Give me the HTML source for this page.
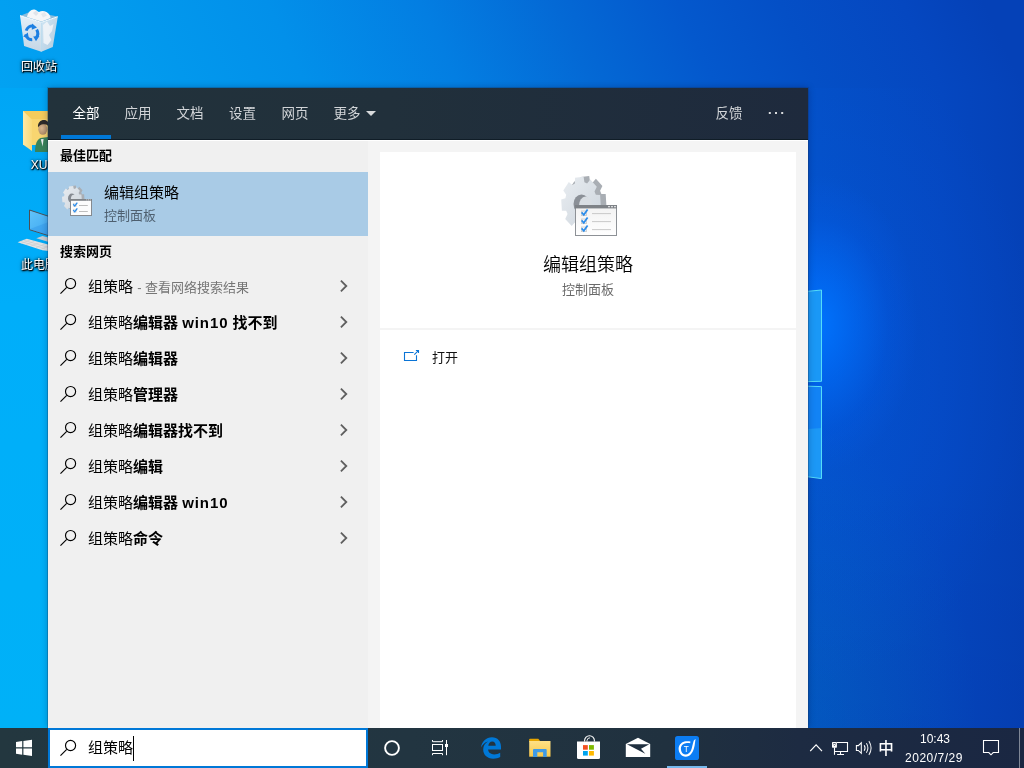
<!DOCTYPE html>
<html lang="zh-CN">
<head>
<meta charset="utf-8">
<title>搜索 - 组策略</title>
<style>
*{box-sizing:border-box;margin:0;padding:0}
html,body{width:1024px;height:768px;overflow:hidden}
body{position:relative;font-family:"Liberation Sans","Noto Sans CJK SC",sans-serif;color:#000;
background:
 linear-gradient(90deg,#02a2f2 0%,#029bee 14%,#0290ea 30%,#037ee2 45%,#0469d5 58%,#0458cd 70%,#044fc6 80%,#0547c0 92%,#0541b7 100%);}
#wt{position:absolute;left:0;top:0;width:1024px;height:88px;overflow:hidden}
#wt div{position:absolute;left:-100px;top:0;width:1300px;height:88px;background:linear-gradient(90deg,#02a2f2 0px,#02a2f2 100.0px,#029bee 243.4px,#0290ea 407.2px,#037ee2 560.8px,#0469d5 693.9px,#0458cd 816.8px,#044fc6 919.2px,#0547c0 1042.1px,#0541b7 1124.0px,#0541b7 1300px);transform:skewX(25deg);transform-origin:0 100%}
#wr{position:absolute;left:808px;top:88px;width:216px;height:640px;background:
 radial-gradient(ellipse 100px 150px at 10px 236px,rgba(0,116,255,.95) 0%,rgba(0,112,255,.62) 32%,rgba(0,100,250,.2) 70%,rgba(0,100,250,0) 100%),
 radial-gradient(ellipse 230px 330px at 0px 270px,rgba(0,105,255,.17) 0%,rgba(0,105,255,.1) 50%,rgba(0,105,255,0) 100%),
 radial-gradient(ellipse 170px 300px at 0px 640px,rgba(0,150,190,.16) 0%,rgba(0,150,190,0) 100%),
 linear-gradient(180deg,rgba(0,0,60,0) 0%,rgba(0,0,60,0) 60%,rgba(0,0,60,.05) 100%)}
#wl{position:absolute;left:0;top:88px;width:48px;height:640px;background:linear-gradient(180deg,#00a6f5 0%,#00aefa 34%,#00b1f7 100%)}
.abs{position:absolute}
#desk,#hdr,#left,#card,#tb{will-change:transform}
svg{display:block;overflow:visible}

/* desktop icons */
.dlabel{position:absolute;width:78px;text-align:center;font-size:12px;line-height:14px;color:#fff;
 text-shadow:1px 1px 1px rgba(0,0,0,1),0 1px 2px rgba(0,0,0,.9),0 0 3px rgba(0,0,0,.75),0 0 4px rgba(0,0,0,.4);white-space:nowrap}

/* search panel */
#panel{position:absolute;left:48px;top:88px;width:760px;height:640px;background:#f4f4f4;overflow:hidden;box-shadow:0 0 0 1px rgba(20,50,90,.28),0 0 7px rgba(0,10,40,.3)}
#hdr{position:absolute;left:0;top:0;width:760px;height:52px;background:linear-gradient(90deg,#22323b 0%,#21303b 45%,#1e2a3d 100%);border-bottom:1px solid #101d27}
.tab{position:absolute;top:0;height:52px;font-size:13.5px;line-height:20px;padding-top:15.5px;color:#d2d5d8;white-space:nowrap}
.tab.sel{color:#fff}
#uline{position:absolute;left:13px;top:47px;width:50px;height:4px;background:#0078d7}
#whiteline{position:absolute;left:0;top:52px;width:760px;height:1px;background:#fff}
#left{position:absolute;left:0;top:53px;width:320px;height:587px;background:#f0f0f0}
.sect{position:absolute;left:12px;font-size:13px;font-weight:bold;line-height:18px;color:#000;white-space:nowrap}
#best{position:absolute;left:0;top:84px;width:320px;height:64px;background:#a9cbe6}
#best .t1{position:absolute;left:56px;top:10px;font-size:15px;line-height:22px;white-space:nowrap}
#best .t2{position:absolute;left:56px;top:35px;font-size:13px;line-height:18px;color:#4e5f6f;white-space:nowrap}
.row{position:absolute;left:0;width:320px;height:36px}
.row .mag{position:absolute;left:12px;top:10px}
.row .tx{position:absolute;left:40px;top:8px;font-size:15px;line-height:22px;white-space:nowrap;color:#000}
.row .tx b{font-weight:bold}
.row .tx .l{letter-spacing:.9px}
.row .tx i{font-style:normal;font-size:13px;color:#767676}
.row .chev{position:absolute;left:292px;top:12px}
#card{position:absolute;left:332px;top:64px;width:416px;height:576px;background:#fff}
#card .title{position:absolute;left:0;top:161px;width:416px;text-align:center;font-size:18px;line-height:28px;color:#000;font-weight:350}
#card .sub{position:absolute;left:0;top:192px;width:416px;text-align:center;font-size:13px;line-height:18px;color:#6a6a6a}
#card .div{position:absolute;left:0;top:176px;width:416px;height:2px;background:#f4f4f4}
#card .open{position:absolute;left:52px;top:197px;font-size:13px;line-height:18px;color:#111}

/* taskbar */
#tb{position:absolute;left:0;top:728px;width:1024px;height:40px;background:linear-gradient(90deg,#23373f 0%,#223541 40%,#20313f 65%,#1d2b42 78%,#1a2742 100%)}
#sbox{position:absolute;left:48px;top:0;width:320px;height:40px;background:#fff;border:2px solid #0078d7}
#sbox .tx{position:absolute;left:38px;top:7px;font-size:15px;line-height:22px;color:#000;white-space:nowrap}
#caret{position:absolute;left:83px;top:6px;width:1px;height:25px;background:#000}
.clock{position:absolute;color:#fff;font-size:12px;line-height:14px;white-space:nowrap;text-align:center}
</style>
</head>
<body>

<!-- WALLPAPER TOP -->
<div id="wt"><div></div></div>

<!-- WALLPAPER LEFT -->
<div id="wl"></div>

<!-- WALLPAPER RIGHT -->
<div id="wr">
  <svg class="abs" style="left:0;top:0" width="216" height="640" viewBox="808 88 216 640">
    <defs><linearGradient id="pane" x1="0" y1="0" x2="1" y2="0"><stop offset="0" stop-color="#0f84fa"/><stop offset="1" stop-color="#1c98fb"/></linearGradient></defs>
    <path d="M808 291.3L821.5 290V381.3L808 381.6Z" fill="#1a98f6"/>
    <path d="M808 386.2L821.5 386.6V478.6L808 476.8Z" fill="#1283f5"/>
    <path d="M808 429L821.5 428V478.6L808 476.8Z" fill="#1c98f6"/>
    <g fill="none" stroke="#55dcf8" stroke-width="1"><path d="M808 291.3L821.5 290V381.3L808 381.6"/><path d="M808 386.2L821.5 386.6V478.6L808 476.8"/></g>
  </svg>
</div>

<!-- DESKTOP ICONS -->
<div id="desk">
<svg class="abs" style="left:0;top:0" width="120" height="290" viewBox="0 0 120 290">
  <defs>
    <linearGradient id="binL" x1="0" y1="0" x2="0" y2="1"><stop offset="0" stop-color="#eef3f8" stop-opacity=".95"/><stop offset="1" stop-color="#cfd9e4" stop-opacity=".95"/></linearGradient>
    <linearGradient id="binR" x1="0" y1="0" x2="1" y2="1"><stop offset="0" stop-color="#e6edf4" stop-opacity=".9"/><stop offset="1" stop-color="#c3cfdc" stop-opacity=".92"/></linearGradient>
    <linearGradient id="flap" x1="0" y1="0" x2="1" y2="0"><stop offset="0" stop-color="#fde9a8"/><stop offset="1" stop-color="#f9d978"/></linearGradient>
    <linearGradient id="scr" x1="0" y1="0" x2="1" y2="1"><stop offset="0" stop-color="#62c4fa"/><stop offset="1" stop-color="#2f9cee"/></linearGradient>
    <radialGradient id="face" cx=".4" cy=".4" r=".7"><stop offset="0" stop-color="#d9b892"/><stop offset="1" stop-color="#a8845f"/></radialGradient>
  </defs>
  <!-- recycle bin -->
  <path d="M21 15.5L31 11.5L57.8 16.6L41.3 22.4Z" fill="#b9c7d6" fill-opacity=".75"/>
  <path d="M27 17C28 12 31 9 34.5 9.5C36.5 9.8 37.5 11.5 39 12C41 10.5 44 10.5 46.5 12C49 13.5 50.5 15.5 50.5 18L41.5 21.5Z" fill="#f4f6f8"/>
  <path d="M33 13L36 10.5L38.5 13.5L36 16Z" fill="#dfe4ea"/><path d="M41 14L44.5 12L47 15.5L43 17.5Z" fill="#e3e8ed"/>
  <path d="M20 15.6L41.3 22.4V51.7L24.1 45.9Z" fill="url(#binL)"/>
  <path d="M41.3 22.4L57.8 16.7L52.8 46.9L41.3 51.7Z" fill="url(#binR)"/>
  <path d="M43 25L47 21.5L50 26L53.5 24L52 31L49 35L51.5 40L47.5 45L43.5 43Z" fill="#f3f6f9" fill-opacity=".85"/>
  <path d="M20 15.6L41.3 22.4L57.8 16.7" fill="none" stroke="#f7fafc" stroke-width="1"/>
  <path d="M41.3 22.4V51.7" stroke="#dfe7ef" stroke-width=".6"/>
  <g fill="none" stroke="#1c7fe2" stroke-width="3">
    <path d="M26.2 30.6A6.2 6.8 0 0 1 33.2 26.2"/>
    <path d="M36.6 29.6A6.2 6.8 0 0 1 36.4 37.6"/>
    <path d="M32.2 39.6A6.2 6.8 0 0 1 25.6 34.4"/>
  </g>
  <path d="M32 23.4L37 27.4L31.8 29.8Z M39.4 36L36 41.2L33.2 36.4Z M23.2 36.4L27.8 32.6L28.8 38.2Z" fill="#1c7fe2"/>
  <!-- user folder -->
  <path d="M23 111H70V145H23Z" fill="#f4cc5c"/>
  <path d="M31.5 119H70V145H31.5Z" fill="#f8d570"/>
  <path d="M23 111L32 119.4V151L23 144.6Z" fill="url(#flap)"/>
  <path d="M35 152C35 144 37 139.5 40.5 138L48 137H56V152Z" fill="#39835a"/>
  <path d="M40.8 139.2L43.6 139L42.6 146.5Z" fill="#e9eef0"/>
  <ellipse cx="42.8" cy="129.2" rx="4.5" ry="5.6" fill="url(#face)"/>
  <path d="M38 127.5C37.5 122.5 40.5 120 44 120C47 120 49.5 122 49 127C47.5 124.5 45 124 43 124.3C41 124.6 39 125.5 38 127.5Z" fill="#2d2b29"/>
  <!-- this pc -->
  <path d="M29.5 210L62 220.7V239.8L29.5 229.7Z" fill="url(#scr)" stroke="#4b4f55" stroke-width="1"/>
  <path d="M29.9 229L62 217V239.5L29.9 229.3Z" fill="#2c8fe6" fill-opacity=".35"/>
  <path d="M36.3 238.2L42.5 236L62 241V246Z" fill="#c9cdd2"/>
  <path d="M17.6 242.3L26.8 238.8L62 248.2V252.6L42.4 250.2Z" fill="#e2e3e5"/>
  <g stroke="#c4c6c9" stroke-width=".5" fill="none"><path d="M20.5 241.3L45 248.8M23.6 240.1L48 247.4M21 243.5L30 240"/><path d="M26 244.6L34.5 241.2M31 246L39.5 242.6M36 247.6L44.5 244.2M41 249.2L49.5 245.6"/></g>
</svg>
<div class="dlabel" style="left:0;top:60px">回收站</div>
<div class="dlabel" style="left:0;top:158px">XU</div>
<div class="dlabel" style="left:0;top:258px">此电脑</div>
</div>

<!-- SEARCH PANEL -->
<div id="panel">
  <div id="hdr">
    <div class="tab sel" style="left:24.5px">全部</div>
    <div class="tab" style="left:76.5px">应用</div>
    <div class="tab" style="left:128.5px">文档</div>
    <div class="tab" style="left:181px">设置</div>
    <div class="tab" style="left:233.5px">网页</div>
    <div class="tab" style="left:285.5px">更多</div>
    <svg class="abs" style="left:318px;top:23px" width="10" height="5" viewBox="0 0 10 5"><path d="M0 0H10L5 5Z" fill="#d8dadc"/></svg>
    <div class="tab" style="left:667.5px">反馈</div>
    <svg class="abs" style="left:720px;top:24px" width="16" height="2" viewBox="0 0 16 2"><rect x="0.8" y="0" width="2" height="2" fill="#d8dadc"/><rect x="7" y="0" width="2" height="2" fill="#d8dadc"/><rect x="13.2" y="0" width="2" height="2" fill="#d8dadc"/></svg>
    <div id="uline"></div>
  </div>
  <div id="whiteline"></div>

  <div id="left">
    <div class="sect" style="top:6px">最佳匹配</div>
    <div id="best" style="top:31px">
      <div class="abs" id="ico32" style="left:12px;top:12px"><svg width="32" height="32" viewBox="60 184 32 32">
<defs><linearGradient id="gfs" x1="0" y1="0" x2="1" y2="1"><stop offset="0" stop-color="#e9edf1"/><stop offset="1" stop-color="#ccd4dc"/></linearGradient></defs>
<path d="M71.5 188.7 L71.6 186.0 L75.9 185.5 L76.3 188.2 L77.7 188.7 L79.2 186.8 L82.5 190.3 L81.3 192.6 L82.0 194.2 L84.1 194.2 L84.5 199.6 L82.4 200.2 L82.0 201.9 L83.5 203.8 L80.7 208.0 L78.9 206.5 L77.7 207.3 L77.6 210.0 L73.3 210.5 L72.9 207.8 L71.5 207.3 L70.0 209.2 L66.7 205.7 L67.9 203.4 L67.2 201.8 L65.1 201.8 L64.7 196.4 L66.8 195.8 L67.2 194.1 L65.7 192.2 L68.5 188.0 L70.3 189.5Z" fill="#a9aeb4"/>
<path d="M68.8 189.1 L68.9 186.4 L73.2 185.9 L73.6 188.6 L75.0 189.1 L76.5 187.2 L79.8 190.7 L78.6 193.0 L79.3 194.6 L81.4 194.6 L81.8 200.0 L79.7 200.6 L79.3 202.3 L80.8 204.2 L78.0 208.4 L76.2 206.9 L75.0 207.7 L74.9 210.4 L70.6 210.9 L70.2 208.2 L68.8 207.7 L67.3 209.6 L64.0 206.1 L65.2 203.8 L64.5 202.2 L62.4 202.2 L62.0 196.8 L64.1 196.2 L64.5 194.5 L63.0 192.6 L65.8 188.4 L67.6 189.9Z" fill="url(#gfs)"/>
<ellipse cx="71.8" cy="198.2" rx="3.8" ry="4.6" fill="#858a91"/>
<ellipse cx="73.9" cy="199" rx="3" ry="4.3" fill="#d9dee3"/>
<rect x="70.5" y="199.5" width="21" height="16" fill="#fcfcfc" stroke="#868a8f" stroke-width="1"/>
<rect x="70" y="199" width="22" height="1.8" fill="#7e8287"/>
<rect x="86.2" y="199.5" width="1" height=".8" fill="#e4e6e8"/><rect x="88" y="199.5" width="1" height=".8" fill="#e4e6e8"/><rect x="89.8" y="199.5" width="1" height=".8" fill="#e4e6e8"/>
<g fill="none" stroke="#d5d5d5" stroke-width="0.6"><rect x="73.3" y="203.4" width="3" height="3"/><rect x="73.3" y="209.2" width="3" height="3"/></g>
<g stroke="#bdbdbd" stroke-width="1"><path d="M79 205.5H87.8"/><path d="M79 211.5H87.8"/></g>
<g fill="none" stroke="#2b8cea" stroke-width="1.3"><path d="M73.2 204.3L74.8 205.9L77.3 202.6"/><path d="M73.2 210.1L74.8 211.7L77.3 208.4"/></g>
</svg></div>
      <div class="t1">编辑组策略</div>
      <div class="t2">控制面板</div>
    </div>
    <div class="sect" style="top:102px">搜索网页</div>

    <div class="row" style="top:127px"><svg class="mag" width="16" height="16" viewBox="0 0 16 16"><circle cx="10.55" cy="5.5" r="5.05" fill="none" stroke="#000" stroke-width="1.15"/><path d="M6.7 9.4L0.5 15.6" stroke="#000" stroke-width="1.15" fill="none"/></svg><div class="tx">组策略 <i>- 查看网络搜索结果</i></div><svg class="chev" width="8" height="12" viewBox="0 0 8 12"><path d="M0.9 0.7L6.3 6L0.9 11.3" fill="none" stroke="#5f5f5f" stroke-width="1.8"/></svg></div>
    <div class="row" style="top:163px"><svg class="mag" width="16" height="16" viewBox="0 0 16 16"><circle cx="10.55" cy="5.5" r="5.05" fill="none" stroke="#000" stroke-width="1.15"/><path d="M6.7 9.4L0.5 15.6" stroke="#000" stroke-width="1.15" fill="none"/></svg><div class="tx">组策略<b>编辑器 <span class="l">win10</span> 找不到</b></div><svg class="chev" width="8" height="12" viewBox="0 0 8 12"><path d="M0.9 0.7L6.3 6L0.9 11.3" fill="none" stroke="#5f5f5f" stroke-width="1.8"/></svg></div>
    <div class="row" style="top:199px"><svg class="mag" width="16" height="16" viewBox="0 0 16 16"><circle cx="10.55" cy="5.5" r="5.05" fill="none" stroke="#000" stroke-width="1.15"/><path d="M6.7 9.4L0.5 15.6" stroke="#000" stroke-width="1.15" fill="none"/></svg><div class="tx">组策略<b>编辑器</b></div><svg class="chev" width="8" height="12" viewBox="0 0 8 12"><path d="M0.9 0.7L6.3 6L0.9 11.3" fill="none" stroke="#5f5f5f" stroke-width="1.8"/></svg></div>
    <div class="row" style="top:235px"><svg class="mag" width="16" height="16" viewBox="0 0 16 16"><circle cx="10.55" cy="5.5" r="5.05" fill="none" stroke="#000" stroke-width="1.15"/><path d="M6.7 9.4L0.5 15.6" stroke="#000" stroke-width="1.15" fill="none"/></svg><div class="tx">组策略<b>管理器</b></div><svg class="chev" width="8" height="12" viewBox="0 0 8 12"><path d="M0.9 0.7L6.3 6L0.9 11.3" fill="none" stroke="#5f5f5f" stroke-width="1.8"/></svg></div>
    <div class="row" style="top:271px"><svg class="mag" width="16" height="16" viewBox="0 0 16 16"><circle cx="10.55" cy="5.5" r="5.05" fill="none" stroke="#000" stroke-width="1.15"/><path d="M6.7 9.4L0.5 15.6" stroke="#000" stroke-width="1.15" fill="none"/></svg><div class="tx">组策略<b>编辑器找不到</b></div><svg class="chev" width="8" height="12" viewBox="0 0 8 12"><path d="M0.9 0.7L6.3 6L0.9 11.3" fill="none" stroke="#5f5f5f" stroke-width="1.8"/></svg></div>
    <div class="row" style="top:307px"><svg class="mag" width="16" height="16" viewBox="0 0 16 16"><circle cx="10.55" cy="5.5" r="5.05" fill="none" stroke="#000" stroke-width="1.15"/><path d="M6.7 9.4L0.5 15.6" stroke="#000" stroke-width="1.15" fill="none"/></svg><div class="tx">组策略<b>编辑</b></div><svg class="chev" width="8" height="12" viewBox="0 0 8 12"><path d="M0.9 0.7L6.3 6L0.9 11.3" fill="none" stroke="#5f5f5f" stroke-width="1.8"/></svg></div>
    <div class="row" style="top:343px"><svg class="mag" width="16" height="16" viewBox="0 0 16 16"><circle cx="10.55" cy="5.5" r="5.05" fill="none" stroke="#000" stroke-width="1.15"/><path d="M6.7 9.4L0.5 15.6" stroke="#000" stroke-width="1.15" fill="none"/></svg><div class="tx">组策略<b>编辑器 <span class="l">win10</span></b></div><svg class="chev" width="8" height="12" viewBox="0 0 8 12"><path d="M0.9 0.7L6.3 6L0.9 11.3" fill="none" stroke="#5f5f5f" stroke-width="1.8"/></svg></div>
    <div class="row" style="top:379px"><svg class="mag" width="16" height="16" viewBox="0 0 16 16"><circle cx="10.55" cy="5.5" r="5.05" fill="none" stroke="#000" stroke-width="1.15"/><path d="M6.7 9.4L0.5 15.6" stroke="#000" stroke-width="1.15" fill="none"/></svg><div class="tx">组策略<b>命令</b></div><svg class="chev" width="8" height="12" viewBox="0 0 8 12"><path d="M0.9 0.7L6.3 6L0.9 11.3" fill="none" stroke="#5f5f5f" stroke-width="1.8"/></svg></div>
  </div>

  <div id="card">
    <div class="abs" id="ico64" style="left:176px;top:20px"><svg width="64" height="64" viewBox="0 0 64 64">
<defs><linearGradient id="gf64" x1="0" y1="0" x2="1" y2="1"><stop offset="0" stop-color="#e9edf1"/><stop offset="1" stop-color="#ccd4dc"/></linearGradient>
<linearGradient id="wf64" x1="0" y1="0" x2="0" y2="1"><stop offset="0" stop-color="#f2f2f2"/><stop offset="1" stop-color="#ffffff"/></linearGradient></defs>
<path d="M24.5 10.6 L24.6 4.9 L33.2 3.9 L34.0 9.5 L36.7 10.6 L39.9 6.7 L46.4 13.9 L44.1 18.7 L45.4 22.0 L49.7 22.1 L50.4 33.4 L46.2 34.5 L45.4 38.1 L48.3 42.2 L42.8 50.8 L39.2 47.7 L36.7 49.4 L36.6 55.1 L28.0 56.1 L27.2 50.5 L24.5 49.4 L21.3 53.3 L14.8 46.1 L17.1 41.3 L15.8 38.0 L11.5 37.9 L10.8 26.6 L15.0 25.5 L15.8 21.9 L12.9 17.8 L18.4 9.2 L22.0 12.3Z" fill="#a9aeb4"/>
<path d="M18.9 11.4 L19.0 5.7 L27.6 4.7 L28.4 10.3 L31.1 11.4 L34.3 7.5 L40.8 14.7 L38.5 19.5 L39.8 22.8 L44.1 22.9 L44.8 34.2 L40.6 35.3 L39.8 38.9 L42.7 43.0 L37.2 51.6 L33.6 48.5 L31.1 50.2 L31.0 55.9 L22.4 56.9 L21.6 51.3 L18.9 50.2 L15.7 54.1 L9.2 46.9 L11.5 42.1 L10.2 38.8 L5.9 38.7 L5.2 27.4 L9.4 26.3 L10.2 22.7 L7.3 18.6 L12.8 10.0 L16.4 13.1Z" fill="url(#gf64)"/>
<ellipse cx="25.5" cy="32" rx="8" ry="9.5" fill="#8b9097"/>
<ellipse cx="29.5" cy="33.5" rx="6.5" ry="9" fill="#d9dee3"/>
<rect x="19.5" y="33.5" width="41" height="30" fill="url(#wf64)" stroke="#8d9196" stroke-width="1"/>
<rect x="19" y="33" width="42" height="3.4" fill="#7e8287"/>
<rect x="52" y="34" width="2" height="1.3" fill="#d9dbdd"/><rect x="55" y="34" width="2" height="1.3" fill="#d9dbdd"/><rect x="58" y="34" width="2" height="1.3" fill="#d9dbdd"/>
<g fill="none" stroke="#c9c9c9" stroke-width="0.8"><rect x="25.4" y="39" width="5" height="4.6"/><rect x="25.4" y="47" width="5" height="4.6"/><rect x="25.4" y="55" width="5" height="4.6"/></g>
<g stroke="#c4c4c4" stroke-width="0.9"><path d="M36 41.6H55"/><path d="M36 49.6H55"/><path d="M36 57.6H55"/></g>
<g fill="none" stroke="#2b8cea" stroke-width="1.7"><path d="M25.6 40.4L27.8 42.8L31.6 37.4"/><path d="M25.6 48.4L27.8 50.8L31.6 45.4"/><path d="M25.6 56.4L27.8 58.8L31.6 53.4"/></g>
</svg></div>
    <div class="title" style="top:99px">编辑组策略</div>
    <div class="sub" style="top:129px">控制面板</div>
    <div class="div"></div>
    <svg class="abs" style="left:20px;top:192px" width="24" height="24" viewBox="400 344 24 24"><path d="M413.6 352.5H404.5V360.5H416.5V355.3" fill="none" stroke="#0a74d6" stroke-width="1.1"/><path d="M414.3 354.7L418.4 350.6M415.9 350.5H418.5V353.1" fill="none" stroke="#0a74d6" stroke-width="1.1"/></svg><div class="open">打开</div>
  </div>
</div>

<!-- TASKBAR -->
<div id="tb">
  <svg class="abs" style="left:0;top:0" width="1024" height="40" viewBox="0 728 1024 40">
    <!-- start -->
    <g fill="#fff">
      <path d="M16 742L22.2 741.1V747.2H16Z"/><path d="M23.4 741L32 739.8V747.2H23.4Z"/>
      <path d="M16 748.4H22.2V754.7L16 753.8Z"/><path d="M23.4 748.4H32V756L23.4 754.8Z"/>
    </g>
    <!-- cortana -->
    <circle cx="392" cy="748" r="6.9" fill="none" stroke="#fff" stroke-width="1.9"/>
    <!-- task view -->
    <g fill="none" stroke="#fff" stroke-width="1">
      <rect x="432.5" y="744.5" width="10" height="6"/>
      <path d="M432.5 740V741.7H442.5V740"/>
      <path d="M432.5 755.2V753.5H442.5V755.2"/>
      <path d="M446.5 740V755.2"/>
    </g>
    <rect x="445" y="744" width="3" height="3" fill="#fff"/>
    <!-- edge -->
    <path fill="#0078d7" fill-rule="evenodd" d="M481 747.6C481.6 741.6 486.2 737.3 492 737.3C497.6 737.3 501 741.4 501 746.8V749.6H488.1C488.3 752.7 490.8 754.4 494.2 754.4C496.4 754.4 498.4 753.8 500.2 752.7V757.1C498.2 758.1 496 758.7 493.3 758.7C487 758.7 483.2 754.8 483.2 749.6C483.2 746.2 485 743.3 488 741.6C484.9 742.3 482.4 744.6 481 747.6ZM488.3 745.7H495.7C495.7 743.2 494.5 741.5 492.2 741.5C490 741.5 488.7 743.2 488.3 745.7Z"/>
    <!-- explorer -->
    <defs><linearGradient id="fold" x1="0" y1="0" x2="0" y2="1"><stop offset="0" stop-color="#ffe187"/><stop offset="1" stop-color="#f9c84a"/></linearGradient></defs>
    <path d="M529.2 739.6Q529.2 738.8 530 738.8H538.3L539.8 740.6V742H529.2Z" fill="#e8a600"/>
    <path d="M529.2 741H550.5V756.7H529.2Z" fill="url(#fold)"/>
    <path d="M533 757V750Q533 749 534 749H545.7Q546.7 749 546.7 750V757H543.1V752.2H537.3V757Z" fill="#3f9ae6"/>
    <!-- store -->
    <path d="M577 741.4H600V757.5Q600 759 598.5 759H578.5Q577 759 577 757.5Z" fill="#fff"/>
    <path d="M584.6 741.6V740.6A4.9 4.9 0 0 1 594.4 740.6V741.6" fill="none" stroke="#fff" stroke-width="1.1"/>
    <path d="M587 741.6V740.6A3 3 0 0 1 590 737.8" fill="none" stroke="#fff" stroke-width="0.9"/>
    <rect x="583" y="745.1" width="4.8" height="4.6" fill="#f25022"/><rect x="589" y="745.1" width="4.9" height="4.6" fill="#7fba00"/>
    <rect x="583" y="751" width="4.8" height="4.6" fill="#00a4ef"/><rect x="589" y="751" width="4.9" height="4.6" fill="#ffb900"/>
    <!-- mail -->
    <path d="M625.8 757.1V743.9L638 737.8L650.2 743.9V757.1Z" fill="#fff"/>
    <path d="M626.9 744.2H649.3L641 748.7L645.3 753.7Z" fill="#1f2f3f"/>
    <!-- blue app -->
    <rect x="675" y="735.9" width="24" height="24.1" rx="2.6" fill="#0c7df3"/>
    <path fill="#fff" d="M690.4 741.4C688.8 741.1 687.2 741.1 685.7 741.2C683.9 741.4 682.2 742.1 681 743.4C679.5 744.8 678.6 746.6 678.6 748.6C678.6 750.7 679.2 752.6 680.4 754.1C681.7 755.8 683.6 756.8 685.7 756.8C687.8 756.8 689.7 755.8 691.1 754.1C692.4 752.6 693.3 750.7 693.9 748.6C694.5 746.7 694.8 744.8 695 742.8C695.2 741.5 695.4 740.2 695.6 739C694.9 739.5 694.2 740.1 693.7 740.8C693.2 742.5 692.8 744.2 692.3 745.9C692 747.4 691.6 748.8 691.1 750.2C690.6 751.4 689.8 752.5 688.8 753.3C687.9 754.1 686.8 754.5 685.7 754.5C684.5 754.5 683.4 754.1 682.5 753.3C681.4 752.1 680.9 750.4 680.9 748.6C680.9 747.1 681.5 745.7 682.5 744.7C683.4 743.8 684.5 743.3 685.7 743.2C687.2 743.1 688.7 743.1 690.2 743.2Z"/>
    <text x="686.3" y="752.1" font-family="'Liberation Sans',sans-serif" font-size="8.2" fill="#fff" text-anchor="middle">T</text>
    <rect x="667" y="766" width="40" height="2" fill="#76b9ed"/>
    <!-- tray chevron -->
    <path d="M810.2 751.2L816.1 744.8L822 751.2" fill="none" stroke="#fff" stroke-width="1.2"/>
    <!-- network -->
    <g fill="none" stroke="#fff" stroke-width="1.1">
      <path d="M836.9 742.5H847.5V751.5H835"/>
      <path d="M834.5 747.5V754.8"/>
      <path d="M840.5 751.5V754.5M837.1 754.5H844"/>
    </g>
    <rect x="832" y="742.1" width="4.9" height="5.6" rx="0.6" fill="#fff"/>
    <path d="M833.4 744.6L834.4 745.6L835.5 744.6" fill="none" stroke="#1d2b42" stroke-width="0.7"/>
    <rect x="833.2" y="743" width="2.5" height="0.7" fill="#1d2b42"/>
    <!-- volume -->
    <g fill="none" stroke="#fff" stroke-width="1.05">
      <path d="M856.4 745.6H858.3L861.3 742.8V753.2L858.3 750.4H856.4Z"/>
      <path d="M864.2 745.3Q865.9 748 864.2 750.8"/>
      <path d="M866.4 743.3Q869.4 748 866.4 752.7" stroke-opacity=".95"/>
      <path d="M868.9 741.1Q873.3 748 868.9 754.9" stroke-opacity=".9"/>
    </g>
    <!-- notification -->
    <path d="M983.5 740.5H998.5V752.5H993.2L991 754.8L988.8 752.5H983.5Z" fill="none" stroke="#fff" stroke-width="1.1"/>
    <rect x="1019" y="728" width="1" height="40" fill="#7f8796"/>
  </svg>
  <div class="abs" style="left:877px;top:10.5px;width:18px;text-align:center;font-size:15.5px;line-height:20px;font-weight:500;color:#fff">中</div>
  <div id="sbox">
    <svg class="abs" style="left:10px;top:10px" width="16" height="16" viewBox="0 0 16 16"><circle cx="10.55" cy="5.5" r="5.05" fill="none" stroke="#000" stroke-width="1.15"/><path d="M6.7 9.4L0.5 15.6" stroke="#000" stroke-width="1.15" fill="none"/></svg>
    <div class="tx">组策略</div>
    <div id="caret"></div>
  </div>
  <div class="clock" style="left:905px;top:4px;width:60px">10:43</div>
  <div class="clock" style="left:899px;top:23px;width:70px;letter-spacing:.5px">2020/7/29</div>
</div>

</body>
</html>
